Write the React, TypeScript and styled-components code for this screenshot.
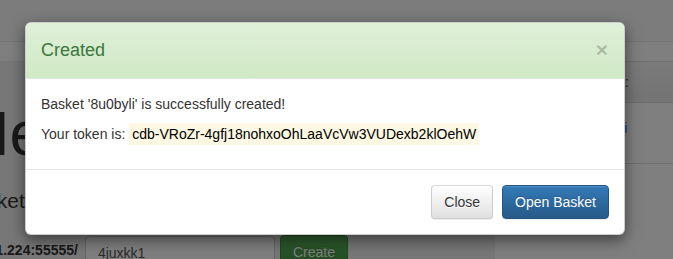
import React from 'react';
import styled, { createGlobalStyle } from 'styled-components';

const GlobalStyle = createGlobalStyle`
  html,
  body {
    margin: 0;
    padding: 0;
    background: #fff;
    overflow: hidden;
  }
  body {
    font-family: 'Liberation Sans', Arial, sans-serif;
    font-size: 14px;
    line-height: 20px;
    color: #333;
  }
  * {
    box-sizing: border-box;
  }
`;

const Viewport = styled.div`
  position: relative;
  width: 673px;
  height: 259px;
  overflow: hidden;
`;

// page behind the dialog
const Navbar = styled.div`
  height: 42px;
  background: #f8f8f8;
  border-bottom: 1px solid #e7e7e7;
`;

const Main = styled.div`
  display: flex;
  gap: 10px;
  margin-left: -245px;
  padding-top: 19px;
`;

const Jumbotron = styled.div`
  flex: 0 0 740px;
  padding: 38px 0 60px;
  background: #eee;
  border-radius: 6px;
  text-align: center;
`;

const Heading = styled.h1`
  margin: 0 0 18px;
  padding-left: 14px;
  font-size: 63px;
  line-height: 69px;
  font-weight: 500;
`;

const Lead = styled.p`
  margin: 0 0 19px;
  font-size: 21px;
  line-height: 30px;
  font-weight: 300;
`;

const FormRow = styled.div`
  display: flex;
  justify-content: center;
  align-items: flex-start;
`;

const HostLabel = styled.label`
  margin-top: 5px;
  font-weight: bold;
`;

const NameInput = styled.input`
  width: 190px;
  height: 34px;
  margin: 1px 0 0 7px;
  padding: 6px 12px;
  font: inherit;
  color: #555;
  background: #fff;
  border: 1px solid #ccc;
  border-radius: 4px;
  box-shadow: inset 0 1px 1px rgba(0, 0, 0, 0.075);
`;

const Button = styled.button<{ variant: 'default' | 'primary' | 'success' }>`
  height: 34px;
  padding: 6px 12px;
  font-family: inherit;
  font-size: 14px;
  line-height: 20px;
  border: 1px solid;
  border-radius: 4px;
  cursor: pointer;
  ${({ variant }) =>
    variant === 'default'
      ? `
    color: #333;
    background-image: linear-gradient(to bottom, #fff 0, #e0e0e0 100%);
    border-color: #dbdbdb #ccc #ccc;
    text-shadow: 0 1px 0 #fff;
    box-shadow: inset 0 1px 0 rgba(255, 255, 255, 0.15), 0 1px 1px rgba(0, 0, 0, 0.075);
  `
      : variant === 'primary'
      ? `
    color: #fff;
    background-image: linear-gradient(to bottom, #337ab7 0, #265a88 100%);
    border-color: #245580;
    text-shadow: 0 -1px 0 rgba(0, 0, 0, 0.2);
    box-shadow: inset 0 1px 0 rgba(255, 255, 255, 0.15), 0 1px 1px rgba(0, 0, 0, 0.075);
  `
      : `
    color: #fff;
    background-image: linear-gradient(to bottom, #5cb85c 0, #419641 100%);
    border-color: #3e8f3e;
    text-shadow: 0 -1px 0 rgba(0, 0, 0, 0.2);
  `}
`;

const CreateButton = styled(Button)`
  margin-left: 5px;
`;

const Panel = styled.div`
  flex: 0 0 360px;
  align-self: flex-start;
  background: #fff;
  border: 1px solid #ddd;
  border-radius: 4px;
`;

const PanelHeading = styled.div`
  padding: 10px 20px 10px 21px;
  background-image: linear-gradient(to bottom, #f5f5f5 0, #e8e8e8 100%);
  border-bottom: 1px solid #ddd;
`;

const PanelBody = styled.div`
  padding: 15px 20px 25px 77px;
  a {
    color: #337ab7;
    text-decoration: none;
  }
`;

const Backdrop = styled.div`
  position: absolute;
  inset: 0;
  background: rgba(0, 0, 0, 0.5);
`;

// dialog
const Modal = styled.div`
  position: absolute;
  top: 22px;
  left: 25px;
  width: 600px;
  background: #fff;
  border: 1px solid rgba(0, 0, 0, 0.2);
  border-radius: 6px;
  box-shadow: 0 5px 15px rgba(0, 0, 0, 0.5);
  overflow: hidden;
`;

const ModalHeader = styled.div`
  display: flex;
  align-items: center;
  justify-content: space-between;
  padding: 15px;
  background-image: linear-gradient(to bottom, #dff0d8 0, #d0e9c6 100%);
  border-bottom: 1px solid #e5e5e5;
`;

const ModalTitle = styled.h4`
  margin: 0;
  font-size: 18px;
  line-height: 25px;
  font-weight: 500;
  color: #3c763d;
`;

const CloseX = styled.button`
  padding: 0;
  margin: -3px 1px 0 0;
  background: none;
  border: 0;
  font-family: inherit;
  font-size: 21px;
  font-weight: bold;
  line-height: 1;
  color: #000;
  opacity: 0.2;
  text-shadow: 0 1px 0 #fff;
  cursor: pointer;
`;

const ModalBody = styled.div`
  padding: 15px;
  p {
    margin: 0 0 10px;
  }
`;

const Token = styled.span`
  padding: 3px;
  color: #000;
  background: #fcf8e3;
`;

const ModalFooter = styled.div`
  display: flex;
  justify-content: flex-end;
  gap: 9px;
  padding: 15px;
  border-top: 1px solid #e5e5e5;
`;

const App = (): JSX.Element => {
  const basket = '8u0byli';
  const token = 'cdb-VRoZr-4gfj18nohxoOhLaaVcVw3VUDexb2klOehW';

  return (
    <Viewport>
      <GlobalStyle />
      <Navbar />
      <Main>
        <Jumbotron>
          <Heading>New Basket</Heading>
          <Lead>Create a basket to collect and inspect HTTP requests</Lead>
          <FormRow>
            <HostLabel>http://192.168.1.224:55555/</HostLabel>
            <NameInput defaultValue="4juxkk1" />
            <CreateButton variant="success">Create</CreateButton>
          </FormRow>
        </Jumbotron>
        <Panel>
          <PanelHeading>Recent Baskets:</PanelHeading>
          <PanelBody>
            <a href="#">{basket}</a>
          </PanelBody>
        </Panel>
      </Main>
      <Backdrop />
      <Modal>
        <ModalHeader>
          <ModalTitle>Created</ModalTitle>
          <CloseX>×</CloseX>
        </ModalHeader>
        <ModalBody>
          <p>Basket '{basket}' is successfully created!</p>
          <p>
            Your token is: <Token>{token}</Token>
          </p>
        </ModalBody>
        <ModalFooter>
          <Button variant="default">Close</Button>
          <Button variant="primary">Open Basket</Button>
        </ModalFooter>
      </Modal>
    </Viewport>
  );
};

export default App;
